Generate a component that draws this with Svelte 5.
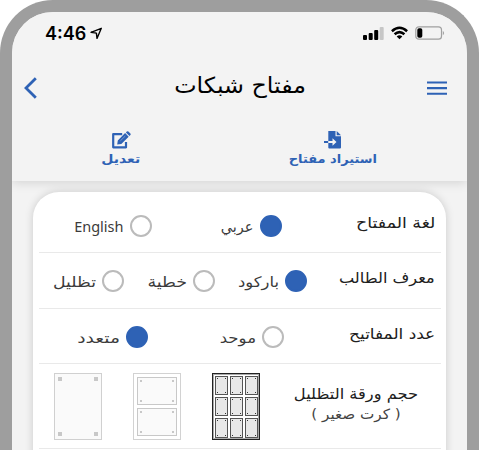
<script lang="ts">
  const rows = [
    {
      label: 'لغة المفتاح',
      stretch: 1.16,
      options: [
        { text: 'عربي', width: 32, stretch: 1, checked: true },
        { text: 'English', width: 50, stretch: 1, checked: false }
      ]
    },
    {
      label: 'معرف الطالب',
      stretch: 1.08,
      options: [
        { text: 'باركود', width: 40, stretch: 1.13, checked: true },
        { text: 'خطية', width: 39, stretch: 1.2, checked: false },
        { text: 'تظليل', width: 43, stretch: 1.19, checked: false }
      ]
    },
    {
      label: 'عدد المفاتيح',
      stretch: 1.13,
      options: [
        { text: 'موحد', width: 37, stretch: 1.14, checked: false },
        { text: 'متعدد', width: 43, stretch: 1.29, checked: true }
      ]
    }
  ];

  const sheets = [
    { cells: 9, kind: 'nine' },
    { cells: 2, kind: 'two' },
    { cells: 1, kind: 'one' }
  ];
</script>

<div class="phone" dir="rtl">
  <header>
    <div class="status" dir="ltr">
      <div class="time">
        <span>4:46</span>
        <svg width="13" height="13" viewBox="0 0 13 13">
          <path d="M11.3 1.3 L1 5.3 L6.4 6.1 L7 11.4 Z" fill="none" stroke="#000" stroke-width="1.4" stroke-linejoin="round" />
        </svg>
      </div>
      <div class="signals">
        <svg width="21" height="14" viewBox="0 0 21 14">
          <rect x="0" y="9" width="4" height="5" rx="1" />
          <rect x="5.7" y="7" width="4" height="7" rx="1" />
          <rect x="11.2" y="4" width="4" height="10" rx="1" />
          <rect x="16.7" y="1" width="4" height="13" rx="1" fill="#c6c6c6" />
        </svg>
        <svg width="17" height="14" viewBox="0 0 17 14">
          <g fill="none" stroke="#000" stroke-width="2.5">
            <path d="M.9 5.2 Q8.5 -1.6 16.1 5.2" />
            <path d="M3.6 8.3 Q8.5 3.9 13.4 8.3" />
          </g>
          <path d="M5.7 10.4 Q8.5 8.2 11.3 10.4 L8.5 13.3 Z" />
        </svg>
        <svg width="30" height="14" viewBox="0 0 30 14">
          <rect x=".8" y=".8" width="25.7" height="12.4" rx="3" fill="none" stroke="#a0a0a0" stroke-width="1.2" />
          <rect x="2.3" y="2.3" width="5" height="9.4" rx="1.7" />
          <path d="M27.8 4.7 Q30.4 7 27.8 9.3 Z" fill="#a0a0a0" />
        </svg>
      </div>
    </div>

    <div class="titlebar">
      <svg class="menu" width="20" height="15" viewBox="0 0 20 15">
        <path d="M0 1.5 H20 M0 7.1 H20 M0 12.7 H20" stroke="#2e62b5" stroke-width="2.1" />
      </svg>
      <h1>مفتاح شبكات</h1>
      <svg class="back" width="13" height="22" viewBox="0 0 13 22">
        <path d="M11.8 1.3 L2 11 L11.8 20.7" fill="none" stroke="#2e62b5" stroke-width="2.8" />
      </svg>
    </div>

    <nav>
      <div class="action">
        <svg width="17" height="18" viewBox="0 0 17 18">
          <path d="M4.3 0 H11.5 V5.3 H17 V16.5 Q17 17.5 16 17.5 H5.3 Q4.3 17.5 4.3 16.5 Z" fill="#2e62b5" />
          <path d="M12.7 0 L17 4.2 H12.7 Z" fill="#2e62b5" />
          <path d="M0 11 H4" stroke="#2e62b5" stroke-width="1.8" />
          <path d="M4.3 10.1 H8.5 V7.2 L12.5 11 L8.5 14.8 V11.9 H4.3 Z" fill="#f3f3f3" />
        </svg>
        <span class="import">استيراد مفتاح</span>
      </div>
      <div class="action">
        <svg width="19" height="18" viewBox="0 0 19 18">
          <path d="M10.2 3.2 H1.2 V16.3 H14 V11" fill="none" stroke="#2e62b5" stroke-width="2.2" stroke-linejoin="round" />
          <path d="M5.2 13.4 L5.8 9.4 L13.1 2.1 L16.7 5.7 L9.3 12.9 Z M13.9 1.4 L14.8 .5 Q15.6 -.2 16.4 .5 L18.4 2.5 Q19.1 3.3 18.4 4 L17.5 4.9 Z" fill="#2e62b5" />
          <path d="M8.4 9.8 L13.3 5" stroke="#b9c9e4" stroke-width=".5" />
        </svg>
        <span class="edit">تعديل</span>
      </div>
    </nav>
  </header>

  <main>
    {#each rows as row}
      <div class="row">
        <div class="label"><span style="transform: scaleX({row.stretch})">{row.label}</span></div>
        <div class="options">
          {#each row.options as option}
            <div class="option">
              <i class="radio" class:checked={option.checked}></i>
              <span style="width: {option.width}px; transform: scaleX({option.stretch})">{option.text}</span>
            </div>
          {/each}
        </div>
      </div>
    {/each}

    <div class="row size">
      <div class="size-label">
        <div>حجم ورقة التظليل</div>
        <small>( كرت صغير )</small>
      </div>
      <div class="sheets">
        {#each sheets as sheet}
          <div class="sheet {sheet.kind}">
            {#each Array(sheet.cells) as _}
              <div class="cell"><i></i><i></i><i></i><i></i></div>
            {/each}
          </div>
        {/each}
      </div>
    </div>
  </main>
</div>

<style>
  :global(body) {
    background: #fff;
    overflow: hidden;
  }

  .phone {
    box-sizing: border-box;
    height: 450px;
    border: 12px solid #9e9e9e;
    border-bottom: 0;
    border-radius: 53px 53px 0 0;
    background: #f3f3f3;
    font-family: 'DejaVu Sans', sans-serif;
    color: #202020;
    overflow: hidden;
  }

  header {
    height: 169px;
    background: #f3f3f3;
    box-shadow: 0 1px 11px rgba(0, 0, 0, 0.15);
  }

  .status {
    display: flex;
    justify-content: space-between;
    height: 46px;
    padding: 0 22px 0 33px;
  }

  .time {
    display: flex;
    gap: 4px;
    padding-top: 11px;
    font: 600 18px/22px Inter, sans-serif;
    color: #000;
  }

  .time svg {
    margin-top: 4px;
  }

  .signals {
    display: flex;
    gap: 7px;
    padding-top: 14px;
  }

  .titlebar {
    display: grid;
    grid-template-columns: 20px 1fr 13px;
    height: 60px;
    padding: 0 20px 0 12px;
  }

  .menu {
    margin-top: 23px;
  }

  .back {
    margin-top: 19px;
  }

  h1 {
    margin: 11px 0 0;
    padding-left: 15px;
    font-size: 22px;
    line-height: 34px;
    font-weight: 400;
    color: #000;
    text-align: center;
    white-space: nowrap;
    transform: scaleX(1.08);
  }

  nav {
    display: flex;
    justify-content: space-between;
    padding: 13px 90px 0;
  }

  .action {
    display: flex;
    flex-direction: column;
    align-items: center;
    width: 89px;
    color: #2e62b5;
    font-size: 12px;
    line-height: 20px;
    font-weight: 700;
    white-space: nowrap;
  }

  .action + .action {
    width: 38px;
  }

  .import {
    transform: scaleX(1.08);
  }

  .edit {
    transform: scaleX(1.17);
  }

  main {
    height: 300px;
    margin: 11px 21px 0;
    padding: 0 5px 0 6px;
    border-radius: 26px;
    background: #fff;
    box-shadow: 0 0 9px rgba(0, 0, 0, 0.17);
    box-sizing: border-box;
  }

  .row {
    display: flex;
    height: 55.5px;
    padding: 0 6px 0 2px;
    border-bottom: 1px solid #e9e9e9;
    box-sizing: border-box;
  }

  .row:first-child {
    height: 61px;
    padding-top: 6px;
  }

  .label {
    width: 116px;
    padding-top: 11px;
    font-size: 15px;
    line-height: 28px;
    white-space: nowrap;
  }

  .label span {
    display: inline-block;
    transform-origin: right;
  }

  .options {
    display: flex;
    flex: 1;
    justify-content: space-around;
    align-items: center;
    padding-top: 2px;
  }

  .row:first-child .options {
    margin-left: -2.5px;
    padding-right: 2.5px;
  }

  .option {
    display: flex;
    align-items: center;
    gap: 6px;
    font-family: 'Noto Sans', 'DejaVu Sans', sans-serif;
    font-size: 14.5px;
    line-height: 20px;
    color: #3b3b3b;
    white-space: nowrap;
  }

  .option span {
    transform-origin: right;
  }

  .radio {
    box-sizing: border-box;
    width: 22px;
    height: 22px;
    border: 2px solid #bbb;
    border-radius: 50%;
  }

  .checked {
    border-color: #2e62b5;
    background: #2e62b5;
  }

  .row.size {
    height: 85px;
    padding: 0;
  }

  .size-label {
    width: 170px;
    padding-top: 19px;
    font-size: 15px;
    line-height: 22px;
    text-align: center;
    white-space: nowrap;
    transform: scaleX(1.085);
  }

  .size-label small {
    display: block;
    font-size: 14px;
    line-height: 19px;
    color: #444;
  }

  .sheets {
    display: flex;
    gap: 31px;
    padding: 9px 11px 0 0;
  }

  .sheet {
    display: grid;
    gap: 2px;
    width: 48px;
    height: 67px;
    padding: 2px;
    border: 1px solid #d2d2d2;
    box-sizing: border-box;
    background: #fff;
  }

  .nine {
    gap: 1px;
    grid-template-columns: repeat(3, 1fr);
    border-color: #222;
    padding: 1px;
    box-shadow: inset 0 0 0 1px #aaa;
  }

  .two {
    gap: 3px;
    padding: 3px;
  }

  .one {
    padding: 0;
    border: 1.5px solid #d0d0d0;
  }

  .cell {
    display: grid;
    grid-template-columns: auto auto;
    justify-content: space-between;
    align-content: space-between;
    padding: 2px;
    border: 1px solid #c8c8c8;
    background: #fafafa;
  }

  .nine .cell {
    margin: 0.5px;
    padding: 1px;
    border-color: #555;
    background: #e8e8e8;
  }

  .one .cell {
    padding: 3px;
    border: 0;
  }

  .cell i {
    width: 2px;
    height: 2px;
    background: #c8c8c8;
  }

  .nine .cell i {
    width: 1px;
    height: 1px;
    background: #333;
  }

  .one .cell i {
    width: 4px;
    height: 4px;
  }
</style>
